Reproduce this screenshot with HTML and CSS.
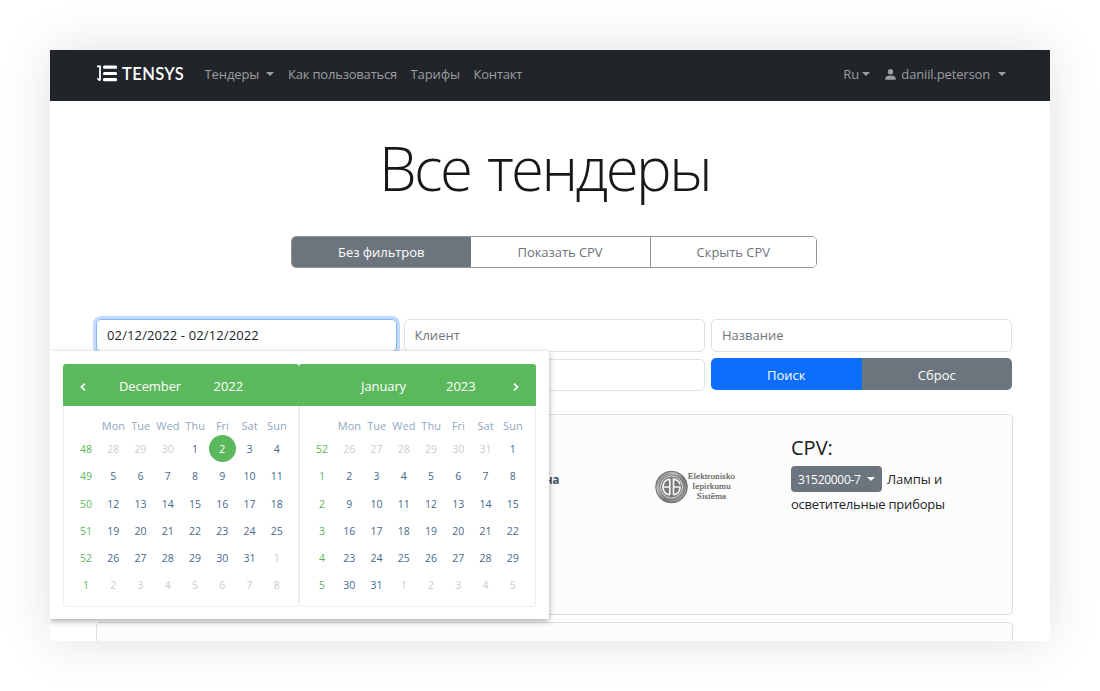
FILE: index.html
```
<!DOCTYPE html>
<html lang="ru">
<head>
<meta charset="utf-8">
<title>Все тендеры</title>
<link rel="stylesheet" href="styles.css">
</head>
<body>
<main class="frame">
  <nav class="nav">
    <div class="brand">
      <svg class="brand-mark" width="20" height="17" viewBox="0 0 20 17"><path d="M3 .5V15.500M0 1.300H3" stroke="#fff" stroke-width="1.800" fill="none"/><path d="M.3 13.200 2.800 15.800" stroke="#fff" stroke-width="1.500"/><path d="M7.500 2.200H18.500M7.500 8.500H18.500M7.500 14.700H18.500" stroke="#fff" stroke-width="3.200" stroke-linecap="round"/></svg>
      <span class="brand-name">TENSYS</span>
    </div>
    <a class="link link-tenders">Тендеры<i class="caret"></i></a>
    <a class="link link-how">Как пользоваться</a>
    <a class="link link-prices">Тарифы</a>
    <a class="link link-contact">Контакт</a>
    <a class="link link-lang">Ru<i class="caret"></i></a>
    <a class="link link-user"><svg class="person" width="11" height="11" viewBox="0 0 11 11"><circle cx="5.5" cy="2.8" r="2.7" fill="#9b9d9e"/><path d="M.3 10.8V9.600C.3 7.600 2 6.500 5.500 6.500s5.200 1.100 5.200 3.100v1.200z" fill="#9b9d9e"/></svg><span>daniil.peterson</span><i class="caret"></i></a>
  </nav>
  <h1 class="title"><span>Все тендеры</span></h1>
  <div class="filters">
    <button class="filter active">Без фильтров</button>
    <button class="filter">Показать CPV</button>
    <button class="filter">Скрыть CPV</button>
  </div>
  <form class="search">
    <div class="field focus">02/12/2022 - 02/12/2022</div>
    <div class="field hint">Клиент</div>
    <div class="field hint">Название</div>
    <div class="field"></div>
    <div class="field"></div>
    <div class="actions"><button type="button" class="find">Поиск</button><button type="button" class="reset">Сброс</button></div>
  </form>
  <section class="card">
    <div class="subject"><b>на</b></div>
    <div class="source">
      <svg width="33" height="34" viewBox="0 0 33 34">
        <defs><linearGradient id="ring" x2="1" y2="1"><stop offset="0" stop-color="#6e6e6e"/><stop offset=".3" stop-color="#bbb"/><stop offset=".6" stop-color="#777"/><stop offset="1" stop-color="#aaa"/></linearGradient></defs>
        <circle cx="16.5" cy="17" r="14.300" fill="#858585" stroke="url(#ring)" stroke-width="3.600"/>
        <circle cx="16.5" cy="17" r="15.800" fill="none" stroke="#666" stroke-width=".8"/>
        <circle cx="16.5" cy="17" r="11" fill="#777" stroke="#ddd" stroke-width="1"/>
        <path d="M14.800 9C10.500 9.800 8 13 8 17s2.500 7.200 6.800 8M8 17H14.800M14.800 9V25M18.500 25V9C22.500 9.800 24.500 12 25 14.500M18.500 17H25C25 21.200 22.600 24.200 18.500 25" fill="none" stroke="#f6f6f6" stroke-width="1.700"/>
      </svg>
      <div class="source-name"><span>Elektronisko</span><span>Iepirkumu</span><span>Sistēma</span></div>
    </div>
    <div class="cpv">
      <h2>CPV:</h2>
      <p><span class="code"><span>31520000-7</span><i class="caret"></i></span><span>Лампы и</span><br><span class="second">осветительные приборы</span></p>
    </div>
  </section>
  <section class="card next"></section>

  <div class="picker">
    <div class="month">
      <header class="head"><svg class="prev" width="6" height="8" viewBox="0 0 6 8"><path d="M5 .6 1.500 4 5 7.400" fill="none" stroke="#fff" stroke-width="1.700"/></svg><span class="mname">December</span><span class="year">2022</span></header>
      <div class="grid">
        <i></i><em>Mon</em><em>Tue</em><em>Wed</em><em>Thu</em><em>Fri</em><em>Sat</em><em>Sun</em>
        <b>48</b><s>28</s><s>29</s><s>30</s><span>1</span><span class="sel">2</span><span>3</span><span>4</span>
        <b>49</b><span>5</span><span>6</span><span>7</span><span>8</span><span>9</span><span>10</span><span>11</span>
        <b>50</b><span>12</span><span>13</span><span>14</span><span>15</span><span>16</span><span>17</span><span>18</span>
        <b>51</b><span>19</span><span>20</span><span>21</span><span>22</span><span>23</span><span>24</span><span>25</span>
        <b>52</b><span>26</span><span>27</span><span>28</span><span>29</span><span>30</span><span>31</span><s>1</s>
        <b>1</b><s>2</s><s>3</s><s>4</s><s>5</s><s>6</s><s>7</s><s>8</s>
      </div>
    </div>
    <div class="month">
      <header class="head head-jan"><span class="mname">January</span><span class="year">2023</span><svg class="following" width="6" height="8" viewBox="0 0 6 8"><path d="M1 .6 4.500 4 1 7.400" fill="none" stroke="#fff" stroke-width="1.700"/></svg></header>
      <div class="grid">
        <i></i><em>Mon</em><em>Tue</em><em>Wed</em><em>Thu</em><em>Fri</em><em>Sat</em><em>Sun</em>
        <b>52</b><s>26</s><s>27</s><s>28</s><s>29</s><s>30</s><s>31</s><span>1</span>
        <b>1</b><span>2</span><span>3</span><span>4</span><span>5</span><span>6</span><span>7</span><span>8</span>
        <b>2</b><span>9</span><span>10</span><span>11</span><span>12</span><span>13</span><span>14</span><span>15</span>
        <b>3</b><span>16</span><span>17</span><span>18</span><span>19</span><span>20</span><span>21</span><span>22</span>
        <b>4</b><span>23</span><span>24</span><span>25</span><span>26</span><span>27</span><span>28</span><span>29</span>
        <b>5</b><span>30</span><span>31</span><s>1</s><s>2</s><s>3</s><s>4</s><s>5</s>
      </div>
    </div>
  </div>
</main>
</body>
</html>
```
FILE: styles.css
```
* { box-sizing: border-box; }
body {
  margin: 0;
  padding: 50px;
  height: 691px;
  overflow: hidden;
  background: #fff;
  color: #212529;
  font: 13px/20px "Open Sans", "Noto Sans", sans-serif;
}
button { font: inherit; letter-spacing: inherit; margin: 0; padding: 0; border: 0; }
.frame {
  position: relative;
  width: 1000px;
  height: 591px;
  background: #fff;
  box-shadow: 0 0 50px rgba(0, 0, 0, .12);
}

/* navigation */
.nav { display: flex; align-items: center; height: 51px; padding: 0 44px 0 47px; background: #212529; color: #9b9d9e; }
.brand { display: flex; align-items: center; width: 107.500px; color: #fff; padding-bottom: 4px; }
.brand-name { margin-left: 5px; font: 600 16.500px/20px Lato, sans-serif; letter-spacing: .4px; }
.link { display: flex; align-items: center; padding-bottom: 3px; white-space: nowrap; }
.link-tenders { width: 83.500px; letter-spacing: -.1px; }
.link-how { width: 122.500px; letter-spacing: -.2px; }
.link-prices { width: 63px; letter-spacing: -.1px; }
.link-contact { letter-spacing: -.2px; }
.link-lang { margin-left: auto; }
.link-user { margin-left: 15px; letter-spacing: -.15px; }
.person { margin-right: 5px; }
.link-user .caret { margin-left: 8px; }
.link-tenders .caret { margin-left: 7px; }
.caret { display: inline-block; border: 4.500px solid transparent; border-width: 4.500px 4px 0; border-top-color: currentColor; margin-left: 3px; margin-top: -1px; }

.title { margin: 0; padding: 25px 11px 0 0; height: 135px; text-align: center; color: #16191c; font: 300 60px/84px "Open Sans", sans-serif; letter-spacing: -2.600px; word-spacing: 3.600px; }

.filters { display: grid; grid-template-columns: 178.500px 179px 166.500px; width: 526px; height: 32px; margin: 0 0 0 241px; border: 1px solid #8f969c; border-radius: 5px; overflow: hidden; }
.filter { background: #fff; color: #6c757d; letter-spacing: -.05px; }
.filter + .filter + .filter { border-left: 1px solid #8f969c; }
.filter.active { background: #6c757d; color: #fff; }

/* search form */
.search { display: grid; grid-template-columns: repeat(3, 301px); grid-template-rows: 33px 32px; gap: 6.500px; margin: 51px 0 0 46px; }
.field { border: 1px solid #dee2e6; border-radius: 5px; padding: 6px 10px 0; line-height: 19px; white-space: nowrap; }
.field.focus { border-color: #86b7fe; box-shadow: 0 0 0 3px #c2dbfe; letter-spacing: .13px; }
.field.hint { color: #6c757d; }
.actions { display: grid; grid-template-columns: 1fr 1fr; height: 32px; margin-top: -.500px; border-radius: 5px; overflow: hidden; }
.actions button { color: #fff; padding-top: 2px; }
.find { background: #0d6efd; }
.reset { background: #6c757d; }

/* results */
.card { display: flex; width: 917px; height: 201px; margin: 23.500px 0 0 46px; border: 1px solid #dcdddd; border-radius: 5px; background: #fcfcfc; }
.card.next { height: 19px; margin-top: 7px; border-bottom: 0; border-radius: 5px 5px 0 0; }
.subject { width: 558px; padding: 55px 0 0 448px; font-size: 11.500px; color: #49525b; }
.source { display: flex; width: 136px; padding-top: 55px; }
.source-name { display: flex; flex-direction: column; align-items: center; padding-top: 1px; width: 49px; height: 34px; margin-left: -1px; color: #555; font: 9px/10px "Liberation Serif", serif; letter-spacing: .12px; -webkit-text-stroke: .2px #666; }
.cpv h2 { margin: 20px 0 0; color: #16191c; font: 500 20px/26px "Open Sans", sans-serif; }
.cpv p { margin: 6px 0 0; line-height: 25px; white-space: nowrap; letter-spacing: -.05px; }
.cpv .second { display: inline-block; margin-top: -1px; letter-spacing: -.22px; }
.code { display: inline-flex; align-items: center; justify-content: space-between; width: 91px; height: 26px; padding: 0 7px; margin: -3px 5px 0 0; border-radius: 4px; background: #6c757d; color: #fff; font-size: 12px; letter-spacing: -.3px; vertical-align: middle; }

/* date range picker */
.picker { position: absolute; left: 0; top: 301px; display: flex; width: 499px; height: 268px; padding: 13px; background: #fff; box-shadow: 0 2px 6px rgba(0, 0, 0, .35); clip-path: inset(-12px -12px -12px 0); }
.month { width: 236px; height: 243px; border: 1px solid #eaeff2; border-radius: 3px; }
.month + .month { width: 237px; }
.head { display: flex; align-items: center; height: 42px; margin: -1px -1px 0; border-radius: 3px 3px 0 0; background: #5cb85c; color: #fff; font-weight: 500; padding: 2px 0 0 17px; }
.head .mname { margin-left: 33px; width: 94.500px; letter-spacing: -.1px; }
.head .prev, .head .following { margin-top: 1px; }
.head-jan { padding-left: 62px; }
.head-jan .mname { margin-left: 0; width: 85px; }
.head-jan .year { width: 67px; }
.grid { display: grid; grid-template-columns: repeat(8, 27.250px); grid-template-rows: 19px repeat(6, 27.250px); margin: 11px 0 0 8.500px; text-align: center; font-size: 10.500px; line-height: 27px; color: #48698a; }
.grid > * { font-style: normal; text-decoration: none; font-weight: 500; }
.grid em { color: #90a7bf; line-height: 18px; font-size: 11px; font-weight: 400; }
.grid b { color: #5cb85c; }
.grid s { color: #ccc; font-weight: 400; }
.grid .sel { width: 27px; height: 27px; margin-top: -1px; padding-top: 1px; border-radius: 50%; background: #5cb85c; color: #fff; }
```
